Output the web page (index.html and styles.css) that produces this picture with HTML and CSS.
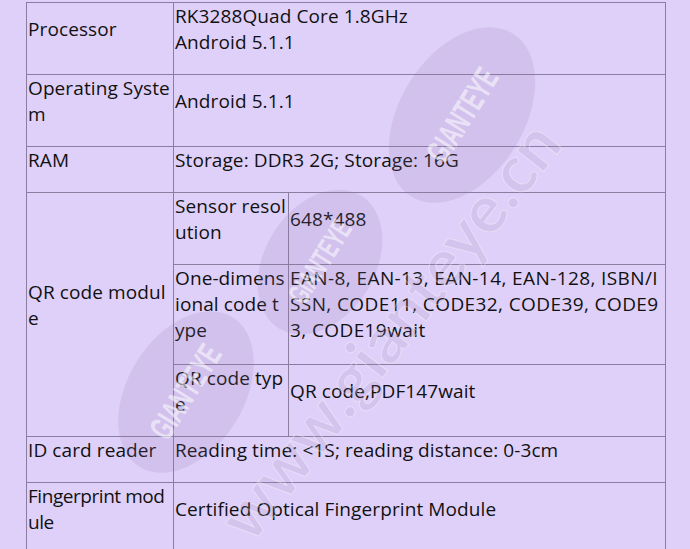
FILE: index.html
```html
<!DOCTYPE html>
<html>
<head>
<meta charset="utf-8">
<link rel="stylesheet" href="styles.css">
</head>
<body>
<div class="page">
  <table class="spec">
    <colgroup>
      <col class="c1"><col class="c2"><col class="c3">
    </colgroup>
    <tbody>
      <tr>
        <td><p>Processor</p></td>
        <td colspan="2"><p>RK3288Quad Core 1.8GHz<br>Android 5.1.1</p></td>
      </tr>
      <tr>
        <td><p>Operating System</p></td>
        <td colspan="2"><p>Android 5.1.1</p></td>
      </tr>
      <tr>
        <td><p>RAM</p></td>
        <td colspan="2"><p>Storage: DDR3 2G; Storage: 16G</p></td>
      </tr>
      <tr>
        <td rowspan="3"><p>QR code module</p></td>
        <td><p>Sensor resolution</p></td>
        <td><p>648*488</p></td>
      </tr>
      <tr>
        <td><p class="tall">One-dimensional code type</p></td>
        <td><p class="tall wide">EAN-8, EAN-13, EAN-14, EAN-128, ISBN/ISSN, CODE11, CODE32, CODE39, CODE93, CODE19wait</p></td>
      </tr>
      <tr>
        <td><p>QR code type</p></td>
        <td><p>QR code,PDF147wait</p></td>
      </tr>
      <tr>
        <td><p>ID card reader</p></td>
        <td colspan="2"><p>Reading time: &lt;1S; reading distance: 0-3cm</p></td>
      </tr>
      <tr>
        <td><p class="tight">Fingerprint module</p></td>
        <td colspan="2"><p>Certified Optical Fingerprint Module</p></td>
      </tr>
    </tbody>
  </table>
  <svg class="watermark" width="690" height="549" viewBox="0 0 690 549" aria-hidden="true">
    <g transform="translate(462 115) rotate(-58)">
      <ellipse rx="96" ry="62" class="wm-oval"/>
      <text x="0" y="12" class="wm-logo">GIANTEYE</text>
    </g>
    <g transform="translate(320 262) rotate(-58)">
      <ellipse rx="78" ry="55" class="wm-oval"/>
      <text x="0" y="10" class="wm-logo small">GIANTEYE</text>
    </g>
    <g transform="translate(186 392) rotate(-58)">
      <ellipse rx="88" ry="58" class="wm-oval"/>
      <text x="0" y="11" class="wm-logo">GIANTEYE</text>
    </g>
    <text transform="translate(408 345) rotate(-52)" class="wm-url">www.gianteye.cn</text>
  </svg>
</div>
</body>
</html>
```

FILE: styles.css
```css
html, body {
  margin: 0;
  padding: 0;
  background: #dfd0f9;
}

.page {
  position: relative;
  width: 690px;
  height: 549px;
  overflow: hidden;
  padding: 2px 0 0 26px;
  box-sizing: border-box;
}

.spec {
  border-collapse: collapse;
  table-layout: fixed;
  width: 639px;
  font-family: "Open Sans", "Noto Sans CJK KR", sans-serif;
  font-size: 19px;
  letter-spacing: 0.1px;
  line-height: 26px;
  color: #111;
}

.spec col.c1 { width: 147px; }
.spec col.c2 { width: 115px; }
.spec col.c3 { width: 377px; }

.spec td {
  border: 1px solid #8b7d9f;
  padding: 0 1px;
  vertical-align: middle;
  word-break: break-all;
}

.spec p {
  margin: 0 0 19px 0;
}

.spec p.tall {
  margin-bottom: 21px;
}

.spec p.wide {
  letter-spacing: 0.4px;
}

.spec p.tight {
  letter-spacing: -0.45px;
}

.watermark {
  position: absolute;
  left: 0;
  top: 0;
  pointer-events: none;
}

.wm-oval {
  fill: rgba(140, 120, 170, 0.16);
}

.wm-logo {
  fill: rgba(255, 255, 255, 0.55);
  font-family: "Liberation Sans", sans-serif;
  font-weight: bold;
  font-size: 34px;
  text-anchor: middle;
  transform: scaleX(0.6);
}

.wm-logo.small {
  font-size: 30px;
}

.wm-url {
  fill: rgba(150, 130, 175, 0.16);
  stroke: rgba(255, 255, 255, 0.35);
  stroke-width: 1;
  font-family: "Lato", sans-serif;
  font-weight: bold;
  font-size: 66px;
  text-anchor: middle;
}
```
